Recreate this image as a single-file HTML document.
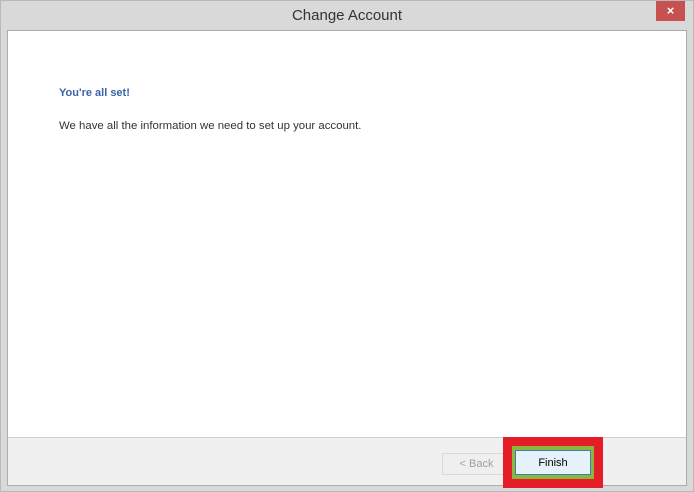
<!DOCTYPE html>
<html><head><style>
body{margin:0;width:694px;height:492px;background:#d9d9d9;position:relative;overflow:hidden;font-family:"Liberation Sans",sans-serif}
.a{position:absolute}
</style></head><body>
<div class="a" style="left:0;top:0;width:692px;height:490px;border:1px solid #b9b9b9"></div>
<div class="a" style="left:0;top:7px;width:694px;text-align:center;font-size:15px;color:#333">Change Account</div>
<div class="a" style="left:656px;top:1px;width:29px;height:20px;background:#c75050;color:#fff;font-size:13px;text-align:center;line-height:20px;font-weight:bold">×</div>
<div class="a" style="left:7px;top:30px;width:678px;height:406px;background:#fff;border:1px solid #acacac"></div>
<div class="a" style="left:7px;top:437px;width:678px;height:47px;background:#f0f0f0;border:1px solid #acacac;border-top:1px solid #d0d0d0"></div>
<div class="a" style="left:59px;top:87px;font-size:11px;font-weight:bold;color:#3b64a6">You're all set!</div>
<div class="a" style="left:59px;top:120px;font-size:11.4px;color:#333">We have all the information we need to set up your account.</div>
<div class="a" style="left:442px;top:453px;width:67px;height:20px;border:1px solid #d9d9d9;background:#efefef;color:#a0a0a0;font-size:11px;text-align:center;line-height:21px">&lt; Back</div>
<div class="a" style="left:503px;top:437px;width:100px;height:51px;background:#e41e26"></div>
<div class="a" style="left:512px;top:446px;width:82px;height:33px;background:#8cb63c"></div>
<div class="a" style="left:515px;top:450px;width:74px;height:23px;background:#e5f1fb;border:1px solid #3c7fb1;font-size:11px;color:#000;text-align:center;line-height:25px">Finish</div>
</body></html>
